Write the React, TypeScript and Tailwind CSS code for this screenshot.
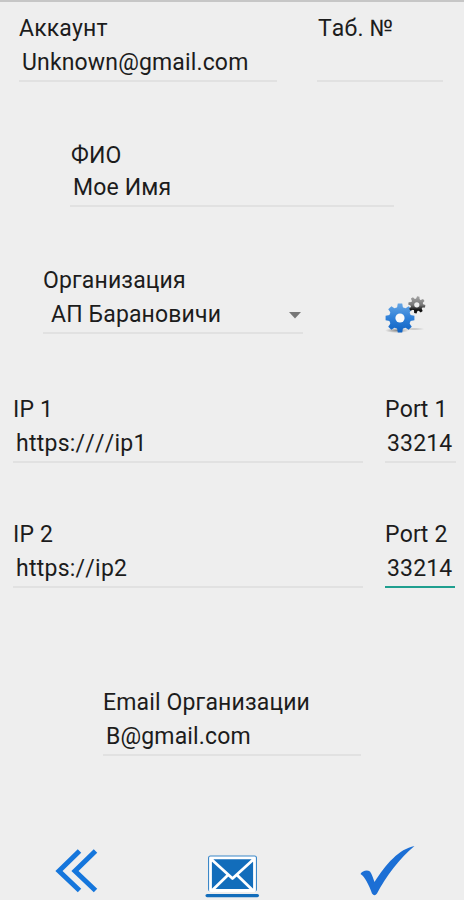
import { clsx } from "clsx";

type FieldProps = {
  label: string;
  value?: string;
  className?: string;
  labelClass?: string;
  valueClass?: string;
  active?: boolean;
  dropdown?: boolean;
};

function Field({
  label,
  value = "",
  className,
  labelClass = "h-[34px]",
  valueClass = "pl-0.5",
  active,
  dropdown,
}: FieldProps) {
  return (
    <div className={className}>
      <div className={clsx("leading-[36px]", labelClass)}>{label}</div>
      <div
        className={clsx(
          "flex h-[37px] items-start justify-between border-b-2 leading-[36px]",
          active ? "border-[#1f9f8f]" : "border-[#e1e1e1]",
          valueClass
        )}
      >
        <span>{value}</span>
        {dropdown && (
          <svg className="mt-[15px] mr-[2px]" width="12" height="7" viewBox="0 0 12 7">
            <path d="M0 0h12L6 6.500z" fill="#777" />
          </svg>
        )}
      </div>
    </div>
  );
}

const teeth = [0, 45, 90, 135, 180, 225, 270, 315];

function SettingsIcon() {
  return (
    <svg width="44" height="40" viewBox="384 294 44 40">
      <defs>
        <linearGradient id="blue" x1="0" y1="0" x2="0" y2="1">
          <stop offset="0" stopColor="#6aa9e6" />
          <stop offset=".5" stopColor="#2f80d8" />
          <stop offset="1" stopColor="#0c5fc0" />
        </linearGradient>
        <linearGradient id="gray" x1="0" y1="0" x2="0" y2="1">
          <stop offset="0" stopColor="#aaa" />
          <stop offset=".5" stopColor="#777" />
          <stop offset=".75" stopColor="#111" />
        </linearGradient>
        <radialGradient id="shade">
          <stop offset="0" stopColor="#888" />
          <stop offset="1" stopColor="#888" stopOpacity="0" />
        </radialGradient>
        <mask id="gearMask">
          <g fill="#fff">
            <circle cx="400" cy="318" r="11" />
            {teeth.map((a) => (
              <path
                key={a}
                d="M396.800 309l1-5.400h4.400l1 5.400z"
                transform={`rotate(${a} 400 318)`}
              />
            ))}
          </g>
          <circle cx="400" cy="318" r="4.600" fill="#000" />
        </mask>
        <mask id="smallMask">
          <g fill="#fff">
            <circle cx="416.800" cy="304.800" r="6.200" />
            {teeth.map((a) => (
              <path
                key={a}
                d="M414.800 300l.8-3.700h2.400l.8 3.700z"
                transform={`rotate(${a + 10} 416.800 304.800)`}
              />
            ))}
          </g>
          <circle cx="416.800" cy="304.800" r="2.600" fill="#000" />
        </mask>
      </defs>
      <ellipse cx="397" cy="330.500" rx="12" ry="2.500" fill="url(#shade)" />
      <ellipse cx="414" cy="329" rx="11" ry="1.500" fill="url(#shade)" opacity=".5" />
      <circle cx="400" cy="318" r="5" fill="#fafafa" />
      <rect x="384" y="302" width="32" height="32" fill="url(#blue)" mask="url(#gearMask)" />
      <rect x="406" y="295" width="21" height="20" fill="url(#gray)" mask="url(#smallMask)" />
    </svg>
  );
}

function BackIcon() {
  return (
    <svg width="44" height="46" viewBox="55 848 44 46">
      <path
        d="M79.500 851L59 871l20.500 19.500M95.500 851L75 871l20.500 19.500"
        fill="none"
        stroke="#1576dc"
        strokeWidth="5"
      />
    </svg>
  );
}

function MailIcon() {
  return (
    <svg width="56" height="46" viewBox="204 852 56 46">
      <rect x="208" y="855.500" width="49" height="36" rx="2.500" fill="#3b87c8" />
      <rect x="209.500" y="857" width="46" height="34" rx="1" fill="#126dbb" />
      <path
        d="M210.500 857.800h44v32.700h-44zM210.500 858.500l22 20 22-20M212 890.500l16.500-16M253 890.500l-16.500-16"
        fill="none"
        stroke="#fff"
        strokeWidth="2.800"
        strokeLinejoin="round"
      />
      <rect x="205.500" y="894" width="53.500" height="3.200" rx="1.600" fill="#126dbb" />
    </svg>
  );
}

function CheckIcon() {
  return (
    <svg width="56" height="52" viewBox="359 844 56 52">
      <path
        d="M360.500 874C362 871 367 869.500 370 871.500C372 874 373 878 374.500 882C386 864 399 849 414.500 846C400 858 386 876 377 893.500Q374.500 897 372 893.500C369 885 365 877 360.500 874Z"
        fill="#1c6fd5"
      />
    </svg>
  );
}

export default function App() {
  return (
    <div className="h-[900px] w-[464px] overflow-hidden border-t-2 border-[#c6c6c6] bg-[#eeeeee] font-['Roboto',sans-serif] text-[23px] tracking-[0.15px] whitespace-nowrap text-[#1c1c1c] [font-kerning:none]">
      <div className="mt-[9px] flex gap-10 pl-[19px]">
        <Field
          label="Аккаунт"
          value="Unknown@gmail.com"
          className="w-[258px]"
          valueClass="pl-[3px]"
        />
        <Field label="Таб. №" className="w-[126px]" labelClass="h-[34px] pl-px" />
      </div>

      <Field
        label="ФИО"
        value="Мое Имя"
        className="mt-[56px] ml-[70px] w-[324px]"
        labelClass="h-8 pl-px"
        valueClass="pl-[3px]"
      />

      <div className="mt-[56px] flex pl-[43px]">
        <Field
          label="Организация"
          value="АП Барановичи"
          className="w-[260px]"
          valueClass="pl-[8px]"
          dropdown
        />
        <button className="mt-[31px] ml-[81px] h-10">
          <SettingsIcon />
        </button>
      </div>

      <div className="mt-[58px] flex gap-[22px] pl-[13px]">
        <Field
          label="IP 1"
          value="https:////ip1"
          className="w-[350px]"
          valueClass="pl-[3px] tracking-[0.25px]"
        />
        <Field label="Port 1" value="33214" className="w-[71px]" />
      </div>

      <div className="mt-[54px] flex gap-[22px] pl-[13px]">
        <Field
          label="IP 2"
          value="https://ip2"
          className="w-[350px]"
          valueClass="pl-[3px] tracking-[0.25px]"
        />
        <Field label="Port 2" value="33214" className="w-[70px]" active />
      </div>

      <Field
        label="Email Организации"
        value="B@gmail.com"
        className="mt-[97px] ml-[103px] w-[258px]"
        valueClass="pl-[3px]"
      />

      <div className="mt-[88px] flex items-start pl-[55px]">
        <button className="mt-1">
          <BackIcon />
        </button>
        <button className="mt-2 ml-[105px]">
          <MailIcon />
        </button>
        <button className="ml-[99px]">
          <CheckIcon />
        </button>
      </div>
    </div>
  );
}
